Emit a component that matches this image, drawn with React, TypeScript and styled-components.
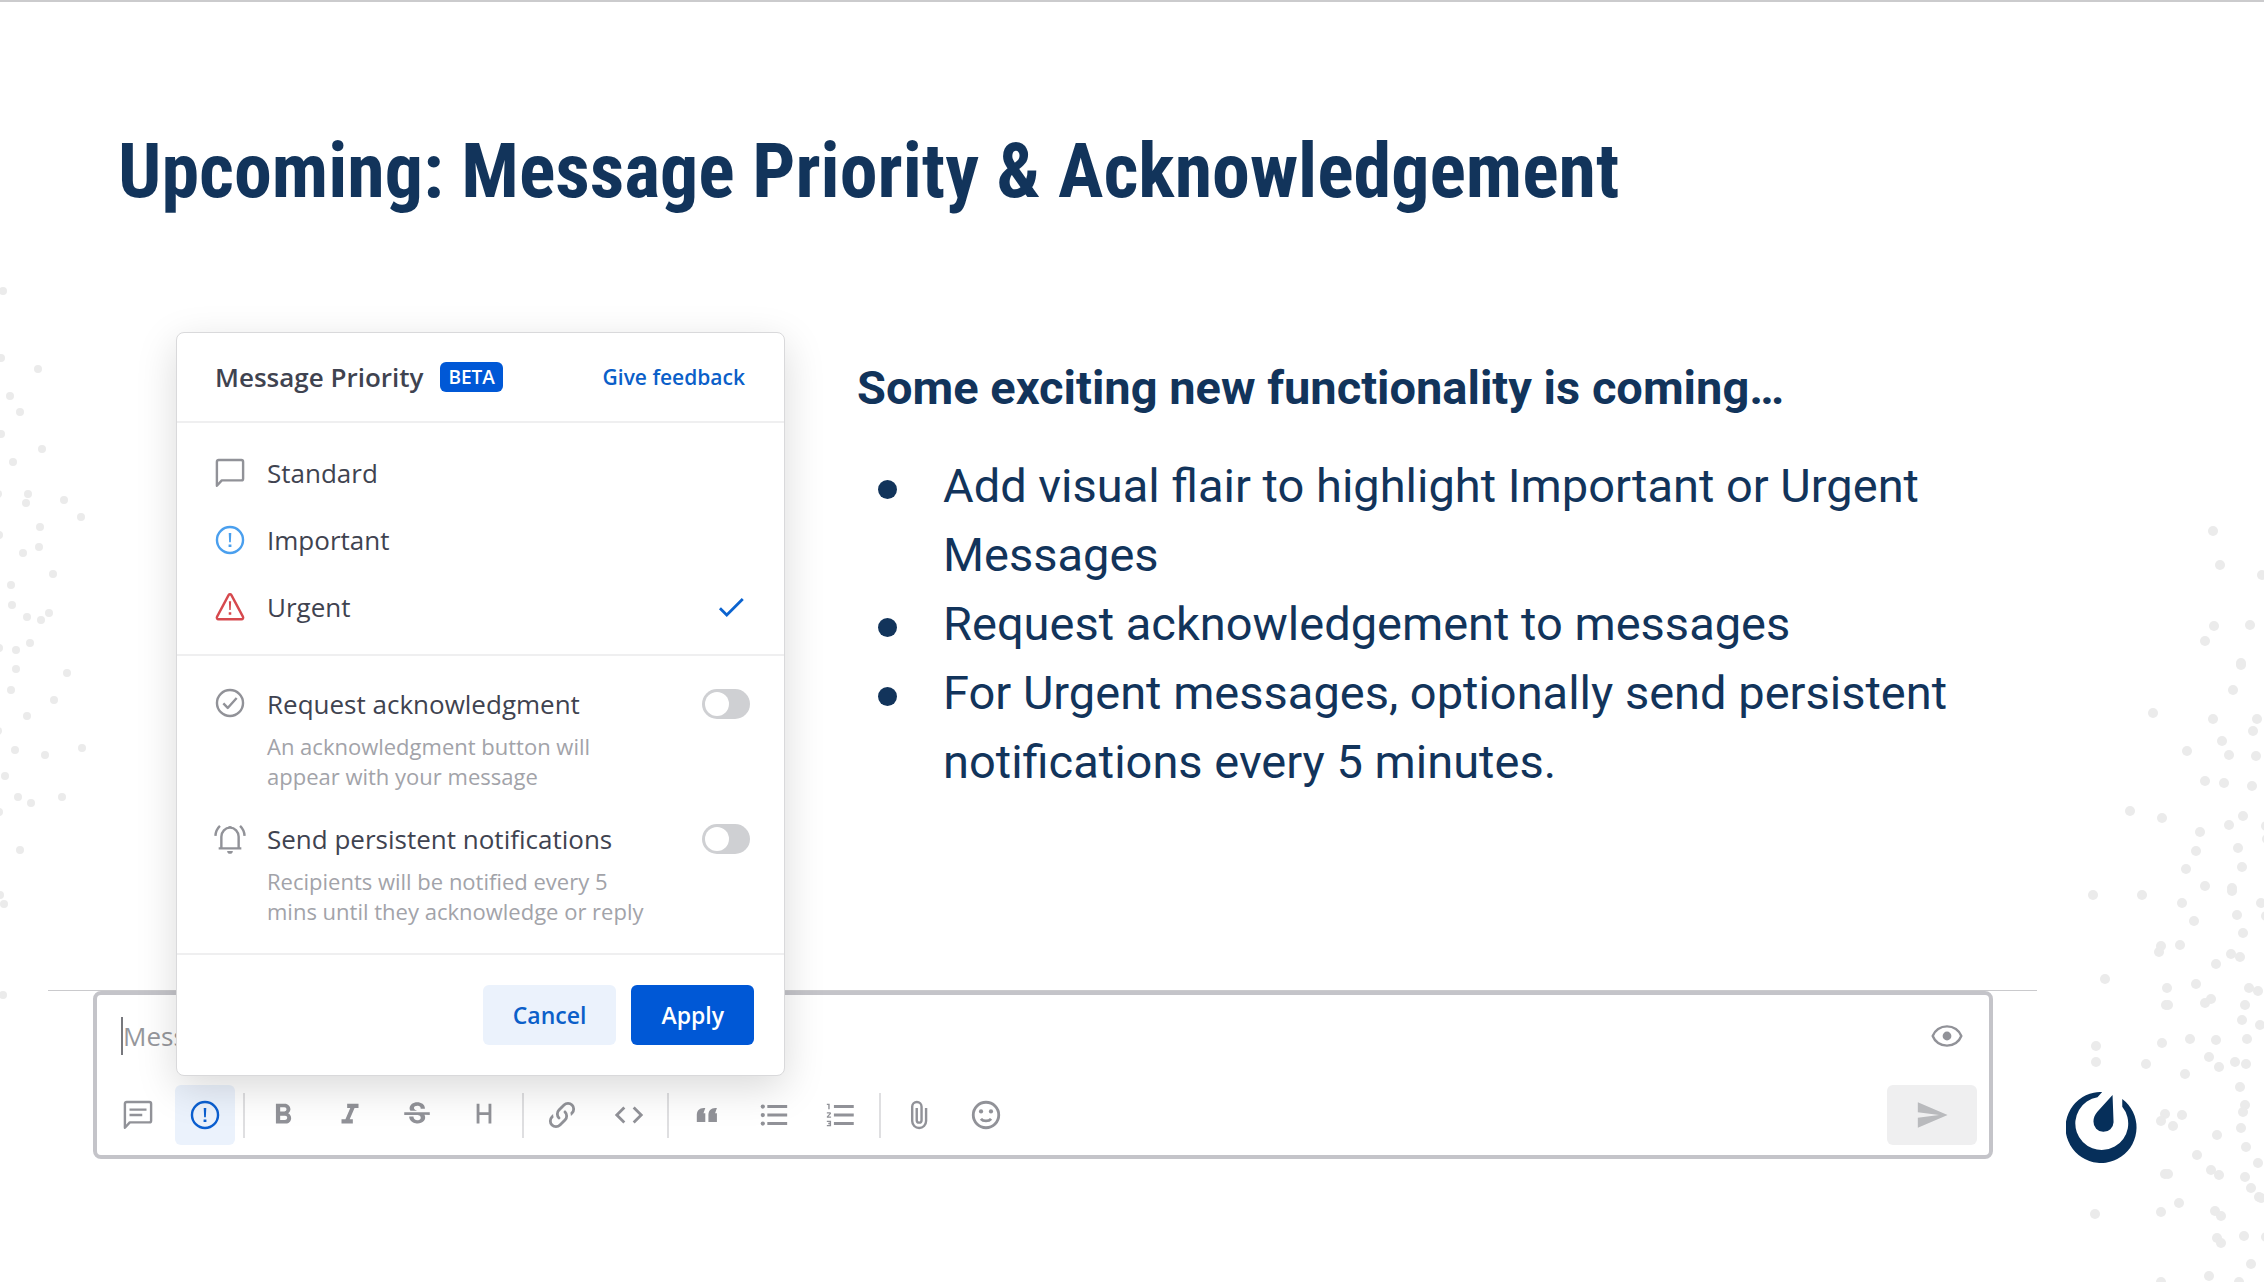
import React from "react";
import styled, { createGlobalStyle, css } from "styled-components";

const navy = "#12345b";
const blue = "#0058d6";
const iconGrey = "#919298";
const ui = `"Open Sans", "Noto Sans", sans-serif`;

const GlobalStyle = createGlobalStyle`
  *, *::before, *::after { box-sizing: border-box; }
  body { margin: 0; background: #fff; }
  h1, h2, p, ul { margin: 0; padding: 0; }
  button, input { font: inherit; }
`;

const Slide = styled.main`
  position: relative;
  min-height: 100vh;
  overflow: hidden;
  border-top: 2px solid #cbcbcd;
  color: ${navy};
  font-family: Roboto, sans-serif;
`;

const DotField = styled.svg<{ $side: "left" | "right" }>`
  position: absolute;
  top: -2px;
  ${(p) => p.$side}: 0;
  width: 300px;
  height: 1282px;
  fill: #ebebeb;
  pointer-events: none;
`;

const Title = styled.h1`
  padding: 124px 118px 116px;
  font-family: "Roboto Condensed", Roboto, sans-serif;
  font-size: 76px;
  line-height: 90px;
  font-weight: 700;
`;

const Columns = styled.div`
  position: relative;
  z-index: 1;
  display: flex;
  align-items: flex-start;
  gap: 72px;
  padding: 0 227px 0 176px;
`;

const Copy = styled.section`
  flex: 1;
  padding-top: 21px;
  font-size: 47px;
  line-height: 69px;
`;

const CopyHeading = styled.h2`
  margin-bottom: 29px;
  font-size: 47px;
  font-weight: 700;
`;

const Bullets = styled.ul`
  list-style: none;
`;

const Bullet = styled.li`
  display: grid;
  grid-template-columns: 86px 1fr;
  &::before {
    content: "";
    width: 19px;
    height: 19px;
    margin: 29px 0 0 21px;
    border-radius: 50%;
    background: ${navy};
  }
`;

const Dialog = styled.form`
  flex: none;
  width: 609px;
  border: 1px solid #d9d9db;
  border-radius: 8px;
  background: #fff;
  box-shadow: 0 12px 40px rgba(0, 0, 0, 0.15);
  color: #3f4350;
  font-family: ${ui};
  font-size: 26px;
  line-height: 36px;
`;

const DialogHeader = styled.header`
  display: flex;
  align-items: center;
  height: 90px;
  padding: 0 39px 0 38px;
  border-bottom: 2px solid #efeff0;
`;

const DialogTitle = styled.h2`
  font-size: 26px;
  font-weight: 600;
`;

const Badge = styled.span`
  margin-left: 17px;
  padding: 0 8px;
  border-radius: 6px;
  background: ${blue};
  color: #fff;
  font-size: 19px;
  font-weight: 600;
  line-height: 30px;
`;

const FeedbackLink = styled.a`
  margin-left: auto;
  color: #0b5fc9;
  font-size: 21px;
  font-weight: 600;
  text-decoration: none;
`;

const Options = styled.div`
  padding: 16px 36px 14px;
  border-bottom: 2px solid #efeff0;
`;

const Option = styled.label`
  display: flex;
  align-items: center;
  gap: 20px;
  height: 67px;
  cursor: pointer;
`;

const HiddenRadio = styled.input`
  position: absolute;
  width: 1px;
  height: 1px;
  margin: 0;
  opacity: 0;
`;

const OptionName = styled.span`
  flex: 1;
`;

const Settings = styled.div`
  display: grid;
  gap: 30px;
  padding: 30px 34px 27px 36px;
  border-bottom: 2px solid #efeff0;
`;

const Setting = styled.div`
  display: flex;
  align-items: flex-start;
  gap: 20px;
`;

const SettingText = styled.div`
  flex: 1;
`;

const SettingName = styled.label`
  display: block;
  margin-bottom: 9px;
`;

const SettingHint = styled.p`
  color: #a2a3a9;
  font-size: 22px;
  line-height: 30px;
`;

const Toggle = styled.input`
  appearance: none;
  flex: none;
  width: 48px;
  height: 30px;
  margin: 3px 0;
  padding: 3px;
  border-radius: 15px;
  background: #cfd0d3;
  cursor: pointer;
  &::before {
    content: "";
    display: block;
    width: 24px;
    height: 24px;
    border-radius: 50%;
    background: #fff;
  }
  &:checked {
    background: ${blue};
  }
  &:checked::before {
    margin-left: 18px;
  }
`;

const DialogActions = styled.footer`
  display: flex;
  justify-content: flex-end;
  gap: 15px;
  padding: 30px;
`;

const ActionButton = styled.button<{ $primary?: boolean }>`
  height: 60px;
  padding: 0 30px;
  border: 0;
  border-radius: 6px;
  background: ${(p) => (p.$primary ? blue : "#ebf2fc")};
  color: ${(p) => (p.$primary ? "#fff" : "#0b5fc9")};
  font-size: 23px;
  font-weight: 600;
`;

const Bottom = styled.div`
  display: flex;
  align-items: flex-start;
  margin-top: -86px;
`;

const ComposerArea = styled.div`
  flex: 1;
  margin-left: 48px;
  padding: 0 44px 0 45px;
  border-top: 1px solid #cacacd;
`;

const Composer = styled.form`
  padding: 22px 12px 10px 11px;
  border: 4px solid #c4c4c9;
  border-radius: 8px;
  font-family: ${ui};
`;

const MessageRow = styled.div`
  display: flex;
  align-items: center;
  height: 38px;
  margin-bottom: 30px;
  padding: 0 13px;
`;

const MessageInput = styled.input`
  flex: 1;
  height: 38px;
  padding: 0;
  border: 0;
  border-left: 2px solid #77787d;
  outline: 0;
  background: transparent;
  font-size: 26px;
  &::placeholder {
    color: #96979c;
    opacity: 1;
  }
`;

const bareButton = css`
  display: flex;
  align-items: center;
  justify-content: center;
  padding: 0;
  border: 0;
  border-radius: 6px;
  background: transparent;
`;

const PreviewButton = styled.button`
  ${bareButton}
  height: 34px;
`;

const Toolbar = styled.div`
  display: flex;
  align-items: center;
  gap: 8px;
`;

const ToolGroup = styled.div`
  display: flex;
  align-items: center;
  gap: 7px;
  & + & {
    padding-left: 8px;
    background: linear-gradient(#dfdfe1, #dfdfe1) left center / 2px 45px no-repeat;
    border-left: 2px solid transparent;
    background-origin: border-box;
  }
`;

const ToolButton = styled.button<{ $active?: boolean }>`
  ${bareButton}
  width: 60px;
  height: 60px;
  background: ${(p) => (p.$active ? "#ebf2fc" : "transparent")};
`;

const SendButton = styled.button`
  ${bareButton}
  width: 90px;
  height: 60px;
  margin-left: auto;
  background: #efeff0;
`;

const Brand = styled.svg`
  flex: none;
  width: 71px;
  height: 71px;
  margin: 102px 127px 0 29px;
  fill: #062f5a;
`;

const Glyph = styled.svg<{ $tone?: string }>`
  flex: none;
  width: 34px;
  height: 34px;
  color: ${(p) => p.$tone ?? iconGrey};
  fill: currentColor;
  .line {
    fill: none;
    stroke: currentColor;
    stroke-width: 1.7;
    stroke-linejoin: round;
  }
  .bold {
    stroke-width: 2;
  }
`;

type IconName = keyof typeof shapes;

const shapes = {
  message: <path className="line" d="M2.75 21V4c0-.7.5-1.2 1.2-1.2h16.1c.7 0 1.2.5 1.2 1.2v12c0 .7-.5 1.2-1.2 1.2H6.2z" />,
  messageText: (
    <>
      <path className="line" d="M2.75 21V4c0-.7.5-1.2 1.2-1.2h16.1c.7 0 1.2.5 1.2 1.2v12c0 .7-.5 1.2-1.2 1.2H6.2z" />
      <path className="line" d="M6 8.2h12M6 12h9" />
    </>
  ),
  alertCircle: (
    <>
      <circle className="line" cx="12" cy="12" r="9.2" />
      <path d="M11.1 7h1.8l-.3 6.500h-1.200zM11 15.100h2v1.900h-2z" />
    </>
  ),
  alertTriangle: (
    <>
      <path className="line" d="M11 3.600c.5-.8 1.500-.8 2 0l8.100 15.200c.5.900 0 1.900-1 1.900H3.900c-1 0-1.500-1-1-1.900z" />
      <path d="M11.200 8h1.600l-.3 6.200h-1zM11.100 15.700h1.800v1.700h-1.800z" />
    </>
  ),
  check: <path d="M21 7L9 19l-5.500-5.500 1.410-1.410L9 16.170 19.590 5.590z" />,
  checkCircle: (
    <>
      <circle className="line" cx="12" cy="12" r="9.200" />
      <path className="line" d="M7.300 12.300l3.100 3.200 6.300-7" />
    </>
  ),
  bellRing: (
    <>
      <path className="line" d="M4 19.300h16M5.900 19V11.200C5.900 7.600 8.600 4.700 12 4.700s6.100 2.900 6.100 6.500V19" />
      <path d="M10.200 4.900a1.900 1.900 0 0 1 3.600 0zM10 21.100h4a2 2 0 0 1-4 0z" />
      <path className="line" d="M4.900 3.500C3 5.300 1.900 7.700 1.700 10.500M19.100 3.500c1.900 1.800 3 4.200 3.200 7" />
    </>
  ),
  bold: (
    <path d="M13.500 15.500H10v-3h3.500A1.500 1.500 0 0 1 15 14a1.500 1.500 0 0 1-1.500 1.500m-3.500-9h3A1.500 1.500 0 0 1 14.500 8 1.500 1.500 0 0 1 13 9.500h-3m5.600 1.290c.97-.68 1.650-1.790 1.650-2.790 0-2.260-1.750-4-4-4H7v14h7.040c2.100 0 3.710-1.700 3.710-3.790 0-1.520-.86-2.820-2.150-3.420z" />
  ),
  italic: <path d="M10 4v3h2.210l-3.420 8H6v3h8v-3h-2.210l3.420-8H18V4z" />,
  strike: (
    <path d="M7.200 8.800C6 6.500 7.700 3.800 10.100 3.300c3.100-1 7.600.4 7.500 4.200h-3c0-.3-.1-.6-.1-.8-.2-.6-.6-.9-1.200-1.100-.8-.3-2.100-.2-2.800.3C9 7.200 10.400 8.500 12 9H7.400c-.1-.1-.1-.2-.2-.2M21 12v-2H3v2h9.600c.2.100.4.100.6.200.6.300 1.100.5 1.300 1.100.1.400.2.900 0 1.300-.2.500-.6.700-1.100.9-1.800.5-4-.2-3.900-2.400h-3c-.1 2.600 2.100 4.400 4.500 4.700 3.800.8 8.300-1.600 6.300-5.900z" />
  ),
  heading: <path className="line bold" d="M7.800 4v14M16.200 4v14M7.800 11h8.400" />,
  link: (
    <path d="M10.590 13.410c.41.390.41 1.030 0 1.420-.39.390-1.030.390-1.420 0a5.003 5.003 0 0 1 0-7.070l3.540-3.540a5.003 5.003 0 0 1 7.070 0 5.003 5.003 0 0 1 0 7.070l-1.490 1.490c.01-.82-.12-1.640-.4-2.420l.47-.48a2.982 2.982 0 0 0 0-4.240 2.982 2.982 0 0 0-4.240 0l-3.530 3.530a2.982 2.982 0 0 0 0 4.240m2.820-4.240c.39-.39 1.030-.39 1.420 0a5.003 5.003 0 0 1 0 7.070l-3.540 3.540a5.003 5.003 0 0 1-7.070 0 5.003 5.003 0 0 1 0-7.070l1.490-1.490c-.01.82.12 1.640.4 2.430l-.47.470a2.982 2.982 0 0 0 0 4.240 2.982 2.982 0 0 0 4.240 0l3.530-3.530a2.982 2.982 0 0 0 0-4.240.973.973 0 0 1 0-1.420z" />
  ),
  code: <path d="M14.600 16.600l4.600-4.600-4.600-4.600L16 6l6 6-6 6-1.400-1.400m-5.200 0L4.800 12l4.600-4.600L8 6l-6 6 6 6 1.400-1.400z" />,
  quote: (
    <path d="M10.800 17H4.800v-5C4.800 9.200 6.400 7 9.800 7h1L9.500 10.800h1.300zM19 17h-6v-5c0-2.800 1.600-5 5-5h1l-1.300 3.800H19z" />
  ),
  bullets: (
    <>
      <path d="M7.300 5h14v2h-14zM7.300 11h14v2h-14zM7.300 17h14v2h-14z" />
      <circle cx="4.100" cy="6" r="1.500" />
      <circle cx="4.100" cy="12" r="1.500" />
      <circle cx="4.100" cy="18" r="1.500" />
    </>
  ),
  numbers: (
    <path d="M7 13v-2h14v2H7m0 6v-2h14v2H7M7 7V5h14v2H7M3 8V5H2V4h2v4H3m-1 9v-1h3v4H2v-1h2v-.5H3v-1h1V17H2m2.250-7a.75.75 0 0 1 .75.75c0 .2-.08.39-.21.520L3.120 13H5v1H2v-.92L4 11H2v-1h2.250z" />
  ),
  clip: (
    <path className="line" d="M17 7v9.300a4.900 4.900 0 0 1-9.800 0V6.100a3.300 3.300 0 0 1 6.600 0v9.600a1.700 1.700 0 0 1-3.400 0V7" />
  ),
  smile: (
    <>
      <circle className="line bold" cx="12" cy="12" r="9" />
      <circle cx="8.500" cy="9.500" r="1.500" />
      <circle cx="15.500" cy="9.500" r="1.500" />
      <path className="line bold" d="M8.400 14.700c1.600 2 5.600 2 7.200 0" />
    </>
  ),
  eye: (
    <>
      <path className="line" d="M1.900 12C3.400 8 7.300 5.200 12 5.200S20.600 8 22.100 12c-1.500 4-5.400 6.800-10.100 6.800S3.400 16 1.900 12z" />
      <circle cx="12" cy="12" r="3.100" />
    </>
  ),
  send: <path d="M2 21l21-9L2 3v7l15 2-15 2v7z" />,
};

const Icon = ({ name, tone }: { name: IconName; tone?: string }) => (
  <Glyph viewBox="0 0 24 24" $tone={tone} aria-hidden="true">
    {shapes[name]}
  </Glyph>
);

const leftDots = [
  [3, 291], [1, 358], [38, 369], [10, 396], [20, 412], [1, 434], [42, 449], [13, 462], [-2, 494], [28, 494],
  [26, 503], [64, 500], [81, 517], [40, 527], [-1, 535], [39, 547], [23, 553], [53, 574], [11, 585], [12, 605],
  [27, 617], [41, 620], [49, 613], [-1, 648], [16, 650], [30, 643], [16, 669], [67, 673], [11, 690], [54, 700],
  [27, 716], [-2, 731], [15, 750], [45, 755], [82, 748], [5, 776], [18, 797], [31, 803], [62, 797], [-1, 812],
  [20, 850], [0, 895], [4, 904], [3, 995],
];

// Measured in from the left edge of the right-hand field.
const rightDots = [
  [249, 531], [256, 565], [298, 575], [250, 626], [286, 625], [241, 641], [277, 663], [277, 665], [269, 690],
  [189, 713], [249, 719], [293, 719], [289, 731], [258, 741], [223, 751], [265, 755], [292, 756], [241, 781],
  [260, 783], [288, 786], [166, 811], [198, 818], [279, 816], [265, 825], [236, 832], [302, 826], [303, 839],
  [232, 851], [274, 848], [222, 869], [278, 867], [241, 886], [268, 888], [268, 891], [129, 895], [178, 895],
  [218, 903], [297, 903], [273, 915], [302, 916], [230, 921], [279, 933], [216, 945], [197, 946], [195, 952],
  [267, 954], [276, 957], [252, 964], [141, 979], [203, 988], [232, 984], [285, 988], [294, 991],
  [202, 1005], [204, 1005], [241, 1003], [247, 999], [281, 1005], [278, 1020], [296, 1025], [198, 1043],
  [226, 1039], [252, 1040], [283, 1039], [132, 1046], [132, 1062], [182, 1064], [245, 1057], [255, 1067],
  [271, 1062], [282, 1064], [221, 1074], [276, 1087], [281, 1105], [279, 1112], [201, 1114], [197, 1121],
  [218, 1115], [209, 1126], [277, 1128], [253, 1135], [282, 1147], [233, 1155], [294, 1163], [201, 1174],
  [204, 1174], [247, 1170], [255, 1175], [281, 1177], [287, 1188], [295, 1197], [297, 1198], [215, 1203],
  [131, 1214], [197, 1212], [251, 1211], [257, 1216], [253, 1238], [257, 1243], [280, 1236], [302, 1237],
  [287, 1264], [245, 1276], [197, 1282], [275, 1282],
];

const toolGroups: { name: IconName; label: string; active?: boolean }[][] = [
  [
    { name: "messageText", label: "Message type" },
    { name: "alertCircle", label: "Message priority", active: true },
  ],
  [
    { name: "bold", label: "Bold" },
    { name: "italic", label: "Italic" },
    { name: "strike", label: "Strikethrough" },
    { name: "heading", label: "Heading" },
  ],
  [
    { name: "link", label: "Link" },
    { name: "code", label: "Code" },
  ],
  [
    { name: "quote", label: "Quote" },
    { name: "bullets", label: "Bulleted list" },
    { name: "numbers", label: "Numbered list" },
  ],
  [
    { name: "clip", label: "Attach file" },
    { name: "smile", label: "Emoji" },
  ],
];

const priorities: { name: string; icon: IconName; tone?: string }[] = [
  { name: "Standard", icon: "message" },
  { name: "Important", icon: "alertCircle", tone: "#4a9fee" },
  { name: "Urgent", icon: "alertTriangle", tone: "#d6494e" },
];

const settings: { id: string; icon: IconName; name: string; hint: React.ReactNode }[] = [
  {
    id: "acknowledge",
    icon: "checkCircle",
    name: "Request acknowledgment",
    hint: <>An acknowledgment button will<br />appear with your message</>,
  },
  {
    id: "persistent",
    icon: "bellRing",
    name: "Send persistent notifications",
    hint: <>Recipients will be notified every 5<br />mins until they acknowledge or reply</>,
  },
];

const PriorityDialog = () => {
  const [priority, setPriority] = React.useState("Urgent");
  return (
    <Dialog>
      <DialogHeader>
        <DialogTitle>Message Priority</DialogTitle>
        <Badge>BETA</Badge>
        <FeedbackLink href="#feedback">Give feedback</FeedbackLink>
      </DialogHeader>
      <Options>
        {priorities.map((p) => (
          <Option key={p.name}>
            <HiddenRadio
              type="radio"
              name="priority"
              checked={priority === p.name}
              onChange={() => setPriority(p.name)}
            />
            <Icon name={p.icon} tone={p.tone} />
            <OptionName>{p.name}</OptionName>
            {priority === p.name && <Icon name="check" tone="#0b63cf" />}
          </Option>
        ))}
      </Options>
      <Settings>
        {settings.map((s) => (
          <Setting key={s.id}>
            <Icon name={s.icon} />
            <SettingText>
              <SettingName htmlFor={s.id}>{s.name}</SettingName>
              <SettingHint>{s.hint}</SettingHint>
            </SettingText>
            <Toggle id={s.id} type="checkbox" />
          </Setting>
        ))}
      </Settings>
      <DialogActions>
        <ActionButton type="button">Cancel</ActionButton>
        <ActionButton type="button" $primary>Apply</ActionButton>
      </DialogActions>
    </Dialog>
  );
};

const App = () => (
  <>
    <GlobalStyle />
    <Slide>
      <DotField $side="left" viewBox="0 0 300 1282" aria-hidden="true">
        {leftDots.map(([x, y], i) => <circle key={i} cx={x} cy={y} r="4" />)}
      </DotField>
      <DotField $side="right" viewBox="0 0 300 1282" aria-hidden="true">
        {rightDots.map(([x, y], i) => <circle key={i} cx={x} cy={y} r="5" />)}
      </DotField>
      <Title>Upcoming: Message Priority &amp; Acknowledgement</Title>
      <Columns>
        <PriorityDialog />
        <Copy>
          <CopyHeading>Some exciting new functionality is coming…</CopyHeading>
          <Bullets>
            <Bullet>Add visual flair to highlight Important or Urgent Messages</Bullet>
            <Bullet>Request acknowledgement to messages</Bullet>
            <Bullet>For Urgent messages, optionally send persistent notifications every 5 minutes.</Bullet>
          </Bullets>
        </Copy>
      </Columns>
      <Bottom>
        <ComposerArea>
          <Composer>
            <MessageRow>
              <MessageInput type="text" placeholder="Message" aria-label="Message" />
              <PreviewButton type="button" aria-label="Preview">
                <Icon name="eye" />
              </PreviewButton>
            </MessageRow>
            <Toolbar>
              {toolGroups.map((group, i) => (
                <ToolGroup key={i}>
                  {group.map((tool) => (
                    <ToolButton key={tool.name} type="button" aria-label={tool.label} $active={tool.active}>
                      <Icon name={tool.name} tone={tool.active ? "#0b5fd0" : undefined} />
                    </ToolButton>
                  ))}
                </ToolGroup>
              ))}
              <SendButton type="button" aria-label="Send">
                <Icon name="send" tone="#b9babd" />
              </SendButton>
            </Toolbar>
          </Composer>
        </ComposerArea>
        <Brand viewBox="0 0 212 212" role="img" aria-label="Mattermost">
          <path d="M108 0A106 106 0 1 0 168 21V44A79 79 0 1 1 94 16z" />
          <path d="M139 9L142 90A30 30 0 0 1 82 88C82 78 86 69 93 60z" />
        </Brand>
      </Bottom>
    </Slide>
  </>
);

export default App;
